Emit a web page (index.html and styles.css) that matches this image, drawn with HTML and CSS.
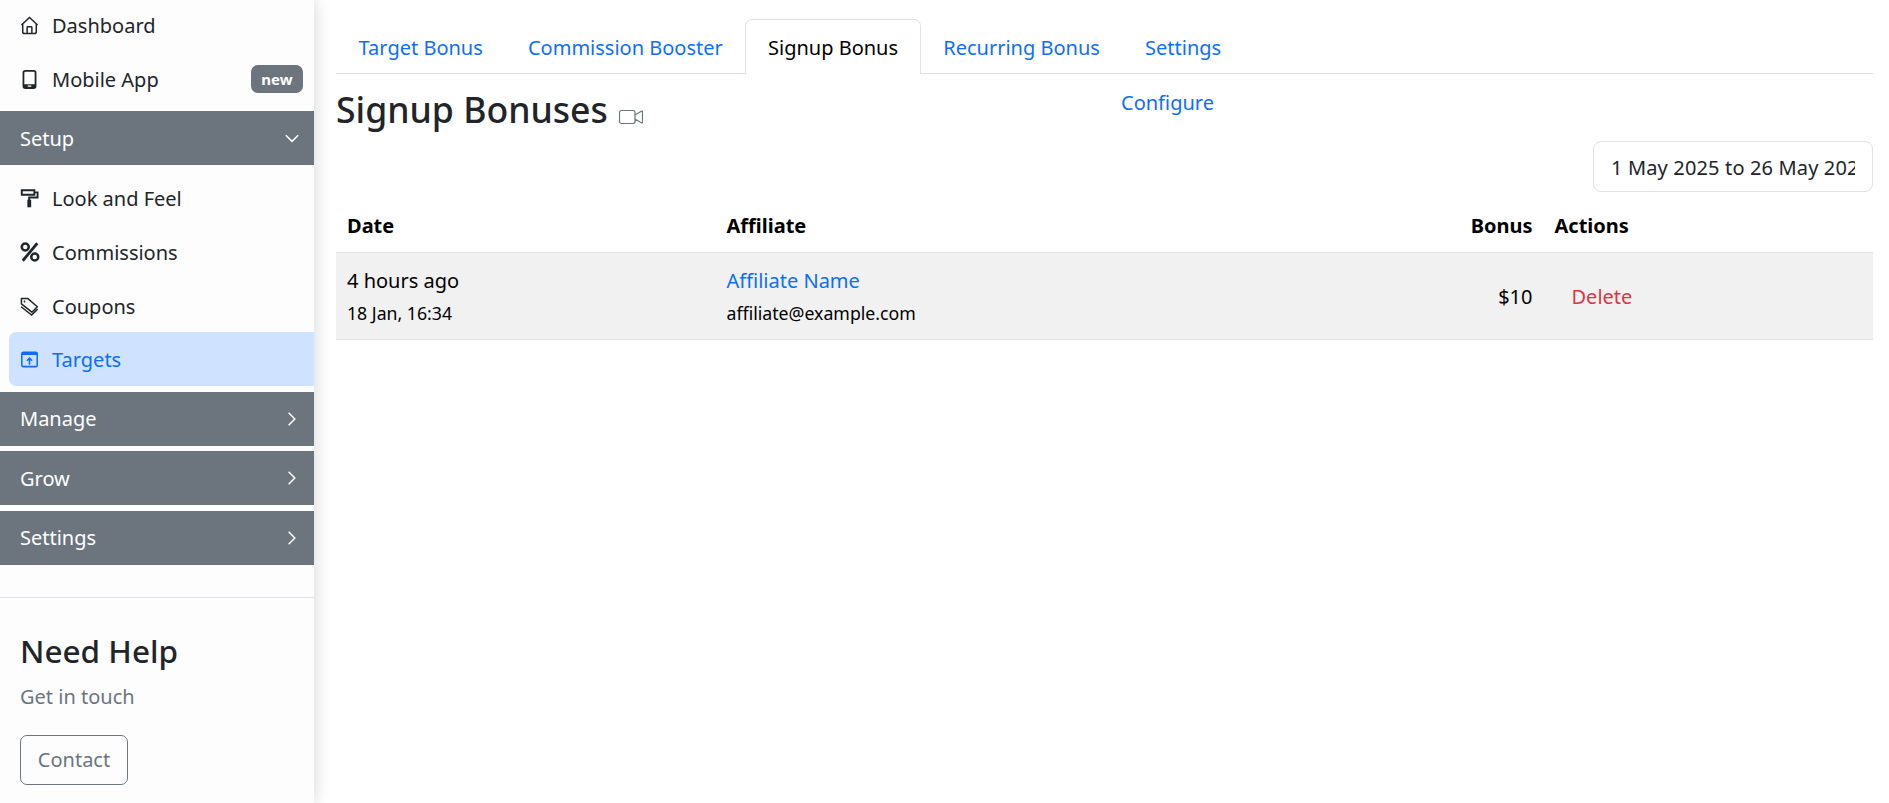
FILE: index.html
```html
<!DOCTYPE html>
<html lang="en">
<head>
<meta charset="utf-8">
<title>Signup Bonuses</title>
<link rel="stylesheet" href="styles.css">
</head>
<body>
<div class="app">
  <aside class="sidebar">
    <nav class="nav">
      <a class="item"><svg class="ico" viewBox="0 0 16 16"><path d="M1.2 7.6 8 1.3l6.8 6.3M2.3 6.8v6.4c0 1 .6 1.6 1.6 1.6h8.2c1 0 1.6-.6 1.6-1.6V6.8M6 14.8V9.6c0-.4.2-.6.6-.6h2.8c.4 0 .6.2.6.6v5.2" fill="none" stroke="currentColor" stroke-width="1.25"/></svg><span>Dashboard</span></a>
      <a class="item"><svg class="ico" viewBox="0 0 16 16"><rect x="2.9" y=".8" width="10.2" height="14.4" rx="1.6" fill="none" stroke="currentColor" stroke-width="1.5"/><rect x="2.9" y="12" width="10.2" height="3.2" rx="1" fill="currentColor"/><rect x="6.5" y="13" width="3" height="1.1" fill="#fff"/></svg><span>Mobile App</span><b class="badge">new</b></a>
      <div class="head"><span>Setup</span><svg class="chev" viewBox="0 0 16 16"><path d="M2.5 5.5 8 11l5.5-5.5" fill="none" stroke="currentColor" stroke-width="1.3"/></svg></div>
      <div class="group">
        <a class="item"><svg class="ico" viewBox="0 0 16 16"><path d="M1.5 1h10.6v3.8H1.5z" fill="none" stroke="currentColor" stroke-width="1.6"/><path d="M12.5 2.8h2.3v4.4H7.7V15" fill="none" stroke="currentColor" stroke-width="1.6"/><path d="M6.2 9h3.2v6.4H6.2z" fill="currentColor"/></svg><span>Look and Feel</span></a>
        <a class="item"><svg class="ico ico-lg" viewBox="0 0 16 16"><path d="M13.8 1 2.2 15" fill="none" stroke="currentColor" stroke-width="2.2"/><circle cx="4.2" cy="4" r="2.8" fill="none" stroke="currentColor" stroke-width="2"/><circle cx="11.8" cy="12" r="2.8" fill="none" stroke="currentColor" stroke-width="2"/></svg><span>Commissions</span></a>
        <a class="item"><svg class="ico" viewBox="0 0 16 16"><path d="M1.2 1.2h5.2l8.2 7-4.6 4.6-8.8-7z" fill="none" stroke="currentColor" stroke-width="1.25" stroke-linejoin="round"/><path d="M.9 8.2 9.8 15.2l5-5" fill="none" stroke="currentColor" stroke-width="1.25"/><circle cx="3.8" cy="3.8" r=".8" fill="currentColor"/></svg><span>Coupons</span></a>
        <a class="item active"><svg class="ico" viewBox="0 0 16 16"><rect x="1.5" y="2" width="13" height="12" rx="1.2" fill="none" stroke="currentColor" stroke-width="1.3"/><path d="M1.5 2h13v2.2h-13z" fill="currentColor"/><path d="M8 12.5V7M5.8 9 8 6.8 10.2 9" fill="none" stroke="currentColor" stroke-width="1.3"/></svg><span>Targets</span></a>
      </div>
      <div class="head"><span>Manage</span><svg class="chev" viewBox="0 0 16 16"><path d="M5 2.5 10.5 8 5 13.5" fill="none" stroke="currentColor" stroke-width="1.3"/></svg></div>
      <div class="head"><span>Grow</span><svg class="chev" viewBox="0 0 16 16"><path d="M5 2.5 10.5 8 5 13.5" fill="none" stroke="currentColor" stroke-width="1.3"/></svg></div>
      <div class="head"><span>Settings</span><svg class="chev" viewBox="0 0 16 16"><path d="M5 2.5 10.5 8 5 13.5" fill="none" stroke="currentColor" stroke-width="1.3"/></svg></div>
    </nav>
    <section class="help">
      <h3 class="help-title">Need Help</h3>
      <p class="help-text">Get in touch</p>
      <a class="btn-contact">Contact</a>
    </section>
  </aside>
  <main class="main">
    <ul class="tabs">
      <li class="tab">Target Bonus</li>
      <li class="tab">Commission Booster</li>
      <li class="tab tab-active">Signup Bonus</li>
      <li class="tab">Recurring Bonus</li>
      <li class="tab">Settings</li>
    </ul>
    <div class="title-row">
      <h1 class="title">Signup Bonuses <svg class="video" viewBox="0 0 24 16"><path d="M2.5 1.5h11.5a2 2 0 0 1 2 2v9a2 2 0 0 1-2 2H2.5a2 2 0 0 1-2-2v-9a2 2 0 0 1 2-2zM16 6l6.3-3.8c.5-.3 1.2 0 1.2.6v10.4c0 .6-.7.9-1.2.6L16 10" fill="none" stroke="#6c757d" stroke-width="1.2"/></svg></h1>
      <a class="configure">Configure</a>
    </div>
    <div class="filter"><div class="date-input"><span>1 May 2025 to 26 May 2025</span></div></div>
    <table class="table">
      <colgroup><col class="c-date"><col class="c-aff"><col class="c-bonus"><col></colgroup>
      <thead>
        <tr><th>Date</th><th>Affiliate</th><th class="right">Bonus</th><th>Actions</th></tr>
      </thead>
      <tbody>
        <tr>
          <td><div class="line1">4 hours ago</div><div class="line2">18 Jan, 16:34</div></td>
          <td><div class="line1 link">Affiliate Name</div><div class="line2">affiliate@example.com</div></td>
          <td class="right">$10</td>
          <td><a class="delete">Delete</a></td>
        </tr>
      </tbody>
    </table>
  </main>
</div>
</body>
</html>
```

FILE: styles.css
```css
* { box-sizing: border-box; }
html, body { margin: 0; height: 100%; overflow: hidden; }
body { font-family: "Noto Sans", "Open Sans", sans-serif; font-size: 20px; color: #212529; background: #fff; }
.app { display: flex; height: 803px; }
.sidebar { width: 314px; flex: none; background: #fdfdfd; box-shadow: 0 0 16px rgba(0,0,0,.18); position: relative; z-index: 1; }
.nav { margin-top: -2px; display: flex; flex-direction: column; }
.item { height: 54px; display: flex; align-items: center; padding-left: 20px; color: #212529; }
.item span { margin-left: 13px; }
.ico { width: 19px; height: 19px; flex: none; color: #212529; }
.ico-lg { width: 20px; height: 20px; margin-right: -1px; }
.badge { margin-left: auto; margin-right: 11px; background: #6c757d; color: #fff; font-size: 15px; line-height: 28px; height: 28px; padding: 0 10.5px; border-radius: 7px; }
.head { height: 54px; margin-top: 5.4px; background: #6c757d; color: #fff; display: flex; align-items: center; justify-content: space-between; padding: 0 13px 0 20px; }
.chev { width: 18px; height: 18px; }
.group { margin-top: 6px; display: flex; flex-direction: column; }
.active { background: #cfe2ff; color: #0d6efd; margin-left: 9px; padding-left: 11px; border-radius: 7px 0 0 7px; margin-top: -1px; }
.active .ico { color: #0d6efd; }
.help { margin-top: 32px; border-top: 1px solid #dee2e6; padding: 33px 20px 0; }
.help-title { margin: 0; font-size: 31.5px; font-weight: 500; line-height: 40px; color: #212529; }
.help-text { margin: 11px 0 0; color: #6c757d; line-height: 30px; }
.btn-contact { display: inline-block; margin-top: 23px; width: 108px; height: 50px; line-height: 48px; text-align: center; border: 1px solid #6c757d; border-radius: 7px; color: #6c757d; }
.main { flex: 1; min-width: 0; padding: 19px 16px 0 22px; }
.tabs { list-style: none; margin: 0; padding: 0; display: flex; border-bottom: 1px solid #dee2e6; height: 55px; }
.tab { height: 55px; line-height: 56px; padding: 0 21.6px; color: #0d6efd; border: 1px solid transparent; border-bottom: 0; }
.tab-active { color: #000; background: #fff; border-color: #dee2e6; border-radius: 7px 7px 0 0; }
.title-row { display: flex; height: 67px; position: relative; }
.title { margin: 12px 0 0; font-size: 35.6px; font-weight: 500; line-height: 46px; color: #212529; }
.video { width: 24px; height: 16px; margin-left: 2px; vertical-align: -2px; }
.configure { position: absolute; left: 785px; top: 15px; color: #0d6efd; }
.filter { display: flex; justify-content: flex-end; }
.date-input { width: 280px; height: 51px; border: 1px solid #dee2e6; border-radius: 8px; padding: 0 17px; line-height: 51px; color: #212529; background: #fff; overflow: hidden; white-space: nowrap; letter-spacing: .15px; }
.date-input span { display: block; overflow: hidden; }
.table { width: 100%; border-collapse: collapse; table-layout: fixed; color: #000; }
.c-date { width: 379.5px; }
.c-aff { width: 720px; }
.c-bonus { width: 108px; }
th { text-align: left; font-weight: 700; height: 60px; padding: 7px 11px 0; border-bottom: 1px solid #dee2e6; }
td { padding: 2px 11px 0; height: 87px; background: #f1f1f1; border-bottom: 1px solid #dee2e6; }
.right { text-align: right; }
.line1 { line-height: 33px; }
.line2 { font-size: 17.7px; line-height: 32px; }
.link { color: #0d6efd; }
.delete { color: #dc3545; margin-left: 17px; }
```
